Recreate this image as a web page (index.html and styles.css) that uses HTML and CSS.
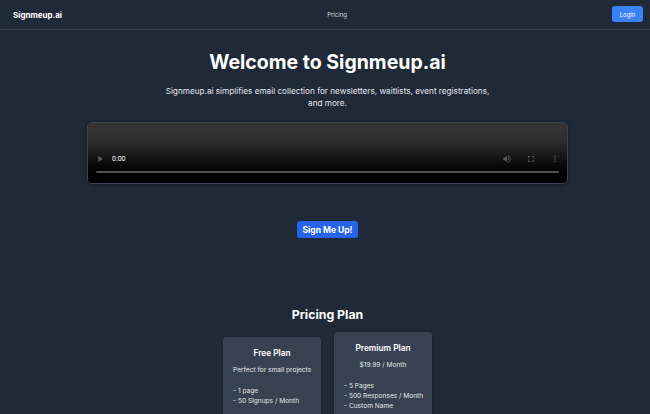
FILE: index.html
```html
<!DOCTYPE html>
<html lang="en">
<head>
<meta charset="utf-8">
<title>Signmeup.ai</title>
<link rel="stylesheet" href="styles.css">
</head>
<body>
<header class="topbar">
  <a class="logo" href="#">Signmeup.ai</a>
  <nav class="nav"><a href="#pricing">Pricing</a></nav>
  <button class="login">Login</button>
</header>
<main class="main">
  <section class="hero">
    <h1 class="title">Welcome to Signmeup.ai</h1>
    <p class="lead">Signmeup.ai simplifies email collection for newsletters, waitlists, event registrations, and more.</p>
    <video class="video" controls></video>
    <div class="cta-row"><button class="cta">Sign Me Up!</button></div>
  </section>
  <section class="pricing" id="pricing">
    <h2 class="pricing-title">Pricing Plan</h2>
    <div class="plans">
      <div class="plan">
        <h3 class="plan-name">Free Plan</h3>
        <p class="plan-desc">Perfect for small projects</p>
        <ul class="plan-list">
          <li>- 1 page</li>
          <li>- 50 Signups / Month</li>
        </ul>
      </div>
      <div class="plan">
        <h3 class="plan-name">Premium Plan</h3>
        <p class="plan-desc">$19.99 / Month</p>
        <ul class="plan-list">
          <li>- 5 Pages</li>
          <li>- 500 Responses / Month</li>
          <li>- Custom Name</li>
        </ul>
      </div>
    </div>
  </section>
</main>
</body>
</html>
```
FILE: styles.css
```css
* { box-sizing: border-box; }
html, body { margin: 0; padding: 0; }
body {
  background: #1f2937;
  color: #ffffff;
  font-family: Inter, "Noto Sans", sans-serif;
}
a { color: inherit; text-decoration: none; }
button { font-family: inherit; border: 0; cursor: pointer; padding: 0; white-space: nowrap; }

.topbar {
  height: 30px;
  display: flex;
  align-items: center;
  justify-content: space-between;
  padding: 0 7px 0 13px;
  border-bottom: 1px solid #374151;
}
.logo { font-size: 8px; line-height: 12px; font-weight: 700; }
.nav { font-size: 6px; line-height: 8px; }
.nav a { color: #d1d5db; }
.login {
  background: #3b82f6;
  color: #fff;
  font-size: 6px;
  width: 31px;
  height: 16px;
  border-radius: 3px;
  margin-top: -1px;
}

.main { padding-left: 5px; }
.hero { text-align: center; padding-top: 19px; }
.title {
  margin: 0;
  font-size: 19.5px;
  line-height: 26px;
  font-weight: 700;
}
.lead {
  margin: 10px auto 0;
  max-width: 330px;
  font-size: 8.2px;
  line-height: 12px;
  color: #e5e7eb;
}
.video {
  display: block;
  zoom: 0.5;
  width: 962px;
  height: 124px;
  margin: 26px auto 0;
  border-radius: 10px;
  border: 2px solid rgba(255,255,255,0.12);
  box-shadow: 0 2px 8px rgba(0,0,0,0.4);
}
.cta-row { margin-top: 37px; display: flex; justify-content: center; }
.cta {
  background: #2563eb;
  color: #fff;
  font-size: 8.5px;
  font-weight: 700;
  width: 61px;
  height: 17px;
  border-radius: 3px;
}

.pricing { text-align: center; padding-top: 69px; }
.pricing-title {
  margin: 0;
  font-size: 12.3px;
  line-height: 16px;
  font-weight: 700;
}
.plans {
  display: flex;
  justify-content: center;
  align-items: center;
  gap: 13px;
  margin-top: 9px;
}
.plan {
  width: 98px;
  background: #374151;
  border-radius: 3px;
  padding: 10px 10px 30px;
  box-shadow: 0 1px 3px rgba(0,0,0,0.3);
}
.plan-name {
  margin: 0;
  font-size: 8.3px;
  line-height: 12px;
  font-weight: 600;
}
.plan-desc {
  margin: 6px 0 0;
  font-size: 6.6px;
  line-height: 10px;
  color: #e5e7eb;
  white-space: nowrap;
}
.plan-list {
  list-style: none;
  margin: 11px 0 0;
  padding: 0;
  text-align: left;
  font-size: 6.6px;
  line-height: 10px;
  color: #e5e7eb;
  white-space: nowrap;
}
```
